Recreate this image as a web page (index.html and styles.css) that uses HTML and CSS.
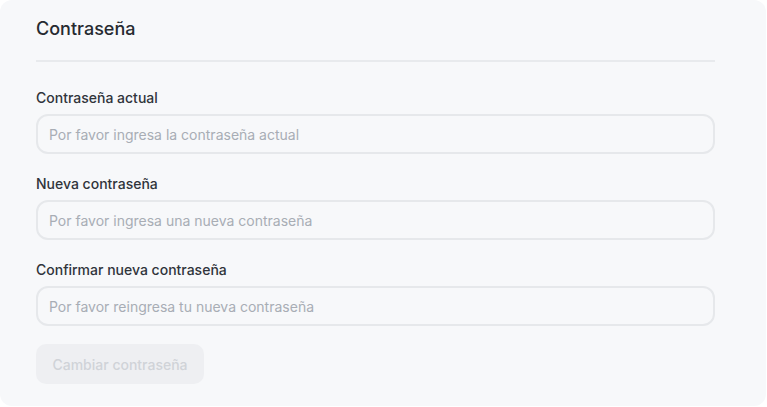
FILE: index.html
```html
<!DOCTYPE html>
<html lang="es">
<head>
<meta charset="utf-8">
<link rel="stylesheet" href="styles.css">
</head>
<body>
<div class="card">
  <h2 class="title">Contraseña</h2>
  <form class="form">
    <div class="field">
      <label class="label">Contraseña actual</label>
      <input class="input" type="password" placeholder="Por favor ingresa la contraseña actual">
    </div>
    <div class="field">
      <label class="label">Nueva contraseña</label>
      <input class="input" type="password" placeholder="Por favor ingresa una nueva contraseña">
    </div>
    <div class="field">
      <label class="label">Confirmar nueva contraseña</label>
      <input class="input" type="password" placeholder="Por favor reingresa tu nueva contraseña">
    </div>
    <button class="btn" type="button" disabled>Cambiar contraseña</button>
  </form>
</div>
</body>
</html>
```
FILE: styles.css
```css
html, body {
  margin: 0;
  padding: 0;
  background: #ffffff;
}
body {
  font-family: Inter, "Noto Sans", sans-serif;
  width: 767px;
  height: 407px;
}
.card {
  box-sizing: border-box;
  width: 766px;
  height: 406px;
  background: #f7f8fa;
  border-radius: 12px;
  padding: 15px 51px 0 36px;
}
.title {
  margin: 0;
  font-size: 18px;
  line-height: 28px;
  font-weight: 500;
  color: #262a30;
  padding-bottom: 17px;
  border-bottom: 2px solid #e8eaed;
}
.form {
  display: flex;
  flex-direction: column;
  gap: 20px;
  padding-top: 26px;
}
.field {
  display: flex;
  flex-direction: column;
  gap: 6px;
}
.label {
  font-size: 14px;
  line-height: 20px;
  font-weight: 500;
  color: #30343b;
}
.input {
  box-sizing: border-box;
  height: 40px;
  border: 2px solid #e6e8eb;
  border-radius: 12px;
  background: #f7f8fa;
  padding: 0 11px;
  font-family: inherit;
  font-size: 14px;
  color: #1f2329;
  outline: none;
}
.input::placeholder {
  color: #a8adb5;
}
.btn {
  margin-top: -2px;
  align-self: flex-start;
  height: 40px;
  width: 168px;
  border: none;
  border-radius: 10px;
  background: #eeeff2;
  color: #d0d3d8;
  font-family: inherit;
  font-size: 14px;
  font-weight: 500;
  padding: 0;
}
```
